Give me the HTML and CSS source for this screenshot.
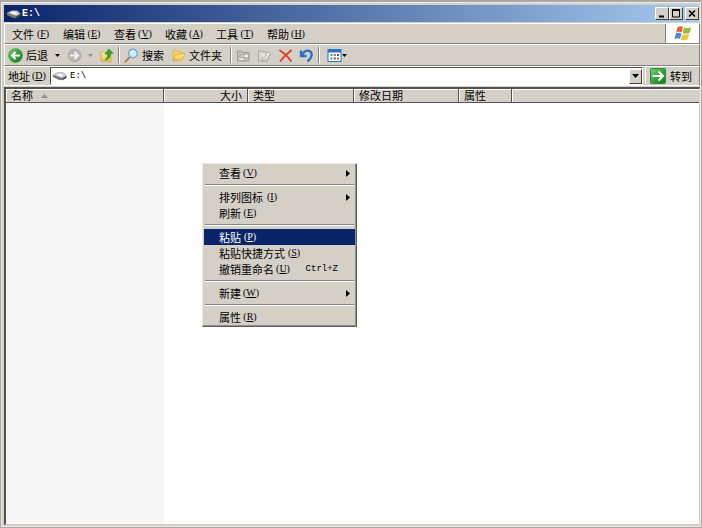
FILE: index.html
```html
<!DOCTYPE html>
<html lang="zh-CN">
<head>
<meta charset="utf-8">
<title>E:\</title>
<link rel="stylesheet" href="styles.css">
</head>
<body>
<svg class="defs" aria-hidden="true">
  <defs>
    <linearGradient id="green" x1="0" y1="0" x2="1" y2="1"><stop offset="0" stop-color="#7ed072"/><stop offset=".55" stop-color="#2f9e35"/><stop offset="1" stop-color="#1c7a22"/></linearGradient>
    <linearGradient id="folder" x1="0" y1="0" x2="0" y2="1"><stop offset="0" stop-color="#fff3a8"/><stop offset="1" stop-color="#f0bb3c"/></linearGradient>
    <symbol id="drive" viewBox="0 0 16 12">
      <path d="M1 5 6 2.500h6L15.500 6 11 8.500z" fill="#cfcfcf" stroke="#888" stroke-width=".6"/>
      <path d="M1 5 11 8.300v2.200L7 10 1 7z" fill="#777"/>
      <path d="M11 8.300 15.500 6v2L11 10.500z" fill="#444"/>
      <path d="M5 4.500 8 3.300l4 1.700-3 1.500z" fill="#fafafa"/>
    </symbol>
  </defs>
</svg>
<div class="window">
  <header class="titlebar">
    <svg class="drive"><use href="#drive"/></svg>
    <h1 class="title">E:\</h1>
    <div class="controls">
      <button class="control" aria-label="最小化"><svg viewBox="0 0 12 11"><path d="M3 8.500h5" stroke="#000" stroke-width="2"/></svg></button>
      <button class="control" aria-label="最大化"><svg viewBox="0 0 12 11"><path d="M2.500 2v7h7V2" fill="none" stroke="#000"/><path d="M2 2h8" stroke="#000" stroke-width="2"/></svg></button>
      <button class="control close" aria-label="关闭"><svg viewBox="0 0 12 11"><path d="m3 2.500 6 6m0-6-6 6" stroke="#000" stroke-width="1.600"/></svg></button>
    </div>
  </header>
  <div class="menurow">
    <nav class="menubar">
      <button>文件<kbd>(<u>F</u>)</kbd></button>
      <button>编辑<kbd>(<u>E</u>)</kbd></button>
      <button>查看<kbd>(<u>V</u>)</kbd></button>
      <button>收藏<kbd>(<u>A</u>)</kbd></button>
      <button>工具<kbd>(<u>T</u>)</kbd></button>
      <button>帮助<kbd>(<u>H</u>)</kbd></button>
    </nav>
    <div class="brand">
      <svg viewBox="0 0 18 17"><path d="M3.500 2.200Q6.500.300 9 2L7.700 7.500Q5 6 2 7.700z" fill="#e8603a"/><path d="M10 2.500q3 1.600 7.200 0l-1.700 5.400q-3.500 1.600-6.800 0z" fill="#8cbf3c"/><path d="M1.800 8.700q3-1.700 5.700-.2L6 14q-2.500-1.500-5.600.2z" fill="#4a86d8"/><path d="M8.400 9q3.400 1.500 6.800 0l-1.600 5.600q-3.600 1.500-6.700-.2z" fill="#f6c336"/></svg>
    </div>
  </div>
  <div class="toolbar" role="toolbar">
    <button class="tool"><svg class="icon" viewBox="0 0 15 15"><circle cx="7.500" cy="7.500" r="6.900" fill="url(#green)" stroke="#338c35" stroke-width=".6"/><path d="M12 7.500H4.500M7.500 4 4 7.500 7.500 11" fill="none" stroke="#fff" stroke-width="2"/></svg>后退</button>
    <button class="drop" aria-label="后退记录"><svg viewBox="0 0 5 3"><path d="M0 0h5L2.500 3z"/></svg></button>
    <button class="tool" aria-label="前进" disabled><svg class="icon" viewBox="0 0 15 15"><circle cx="7.500" cy="7.500" r="6.500" fill="#b5b5b3" stroke="#a0a09e" stroke-width=".6"/><path d="M3 7.500h7.500M7.500 4 11 7.500 7.500 11" fill="none" stroke="#f2f2f2" stroke-width="2"/></svg></button>
    <button class="drop muted" aria-label="前进记录" disabled><svg viewBox="0 0 5 3"><path d="M0 0h5L2.500 3z"/></svg></button>
    <button class="tool" aria-label="向上"><svg class="icon" viewBox="0 0 15 15"><path d="M2 4h4l1 1.500h5V14L2 13z" fill="url(#folder)" stroke="#d7a536" stroke-width=".8"/><path d="M6 12c2-1 2.600-3 2.600-6H6L9.800 1 14 5l-2.600.600c0 3.500-1.400 6.400-5.400 6.400z" fill="#37a632" stroke="#227d22" stroke-width=".6"/></svg></button>
    <span class="divider"></span>
    <button class="tool"><svg class="icon" viewBox="0 0 15 15"><path d="M6 9 1.500 13.500" stroke="#bd7c55" stroke-width="2.200" stroke-linecap="round"/><circle cx="9" cy="5.500" r="4.300" fill="#c9eafa" stroke="#76a5d4" stroke-width="1.400"/><path d="M6.700 5Q7.500 3 9.500 3" fill="none" stroke="#fff"/></svg>搜索</button>
    <button class="tool folders"><svg class="icon" viewBox="0 0 15 15"><path d="M2 12V2.500l3.500-.5L7 3.500l4 .5v3" fill="#f7cf5b" stroke="#d9a73b" stroke-width=".8"/><path d="m2 13 2.500-6L14 5.500 11 12z" fill="url(#folder)" stroke="#d9a73b" stroke-width=".8"/></svg>文件夹</button>
    <span class="divider"></span>
    <button class="tool icononly" aria-label="移至" disabled><svg class="icon" viewBox="0 0 15 15"><path d="M1.500 3h4l1 1.500H13V13H1.500z" fill="#c4c3be" stroke="#9b9b97"/><path d="M4 7h5V4.500L13.500 8 9 11.500V9H4z" fill="#eee" stroke="#92928e" stroke-width=".8"/><path d="M3.500 11h4" stroke="#fff"/></svg></button>
    <button class="tool icononly" aria-label="复制到" disabled><svg class="icon" viewBox="0 0 15 15"><path d="M1.500 3H5l3 2.500V13H1.500z" fill="#d8d8d4" stroke="#a5a5a1"/><path d="M6 4h3l2 2v7H5" fill="#e4e4e0" stroke="#a5a5a1"/><path d="M5 10q4 0 4.500-3.500H8L11 4l3 3-2 .2Q11 12 5 12z" fill="#eee" stroke="#989894" stroke-width=".7"/></svg></button>
    <button class="tool icononly" aria-label="删除"><svg class="icon" viewBox="0 0 15 15"><path d="M2 2.500Q8 6 13 13M13 2.500Q7 7 2.500 13" fill="none" stroke="#dc4327" stroke-width="2" stroke-linecap="round"/></svg></button>
    <button class="tool icononly" aria-label="撤销"><svg class="icon" viewBox="0 0 15 15"><path d="M2 2.500V8h5.500M2.500 7.500C5 3.500 8 2 10.500 3c3.300 1.600 3 6.500-2 10.500" fill="none" stroke="#2a70c4" stroke-width="2.400"/></svg></button>
    <span class="divider tight"></span>
    <button class="tool views" aria-label="查看方式"><svg class="icon" viewBox="0 0 15 15"><rect x="1" y="1.500" width="13" height="12" fill="#fff" stroke="#2872c4"/><path d="M1 3h13" stroke="#2872c4" stroke-width="3"/><path d="M3.500 7h2M3.500 10.500h2" stroke="#3b90a5" stroke-width="2"/><path d="M6.800 7h2M10 10.500h2" stroke="#d55948" stroke-width="2"/><path d="M10 7h2M6.800 10.500h2" stroke="#425b9c" stroke-width="2"/></svg><svg class="caret" viewBox="0 0 5 3"><path d="M0 0h5L2.500 3z"/></svg></button>
  </div>
  <form class="address">
    <label for="path">地址<kbd>(<u>D</u>)</kbd></label>
    <div class="combo">
      <svg class="drive"><use href="#drive"/></svg>
      <input id="path" type="text" value="E:\">
      <button type="button" class="open" aria-label="展开"><svg viewBox="0 0 7 4"><path d="M0 0h7L3.500 4z"/></svg></button>
    </div>
    <button type="button" class="go"><svg viewBox="0 0 16 16"><rect x=".5" y=".5" width="15" height="15" rx="1" fill="url(#green)" stroke="#2e8b34"/><path d="M2.500 8h10M8.500 3.500 13 8l-4.500 4.500" fill="none" stroke="#fff" stroke-width="2"/></svg>转到</button>
  </form>
  <main class="view">
    <table class="files">
      <colgroup><col class="sorted"><col class="size"><col class="type"><col class="date"><col class="attr"><col></colgroup>
      <thead>
        <tr><th>名称<svg class="sort" viewBox="0 0 7 4"><path d="M0 4h7L3.500 0z"/></svg></th><th class="num">大小</th><th>类型</th><th>修改日期</th><th>属性</th><th></th></tr>
      </thead>
      <tbody><tr><td></td><td></td><td></td><td></td><td></td><td></td></tr></tbody>
    </table>
  </main>
</div>
<div class="context" role="menu">
  <button role="menuitem">查看<kbd>(<u>V</u>)</kbd><svg class="more" viewBox="0 0 4 7"><path d="M0 0v7l4-3.500z"/></svg></button>
  <hr>
  <button role="menuitem">排列图标<kbd>(<u>I</u>)</kbd><svg class="more" viewBox="0 0 4 7"><path d="M0 0v7l4-3.500z"/></svg></button>
  <button role="menuitem">刷新<kbd>(<u>E</u>)</kbd></button>
  <hr>
  <button role="menuitem" class="active">粘贴<kbd>(<u>P</u>)</kbd></button>
  <button role="menuitem">粘贴快捷方式<kbd>(<u>S</u>)</kbd></button>
  <button role="menuitem">撤销重命名<kbd>(<u>U</u>)</kbd><span class="shortcut">Ctrl+Z</span></button>
  <hr>
  <button role="menuitem">新建<kbd>(<u>W</u>)</kbd><svg class="more" viewBox="0 0 4 7"><path d="M0 0v7l4-3.500z"/></svg></button>
  <hr>
  <button role="menuitem">属性<kbd>(<u>R</u>)</kbd></button>
</div>
</body>
</html>
```
FILE: styles.css
```css
:root {
  --face: #d4d0c8;
  --shade: #848280;
  --dark: #55534f;
  --navy: #0a246a;
}

* { box-sizing: border-box; }

body {
  margin: 0;
  font: 11px/16px "Noto Sans CJK SC", sans-serif;
  color: #000;
}

button {
  display: flex;
  align-items: center;
  margin: 0;
  padding: 0;
  border: 0;
  background: none;
  color: inherit;
  font: inherit;
  white-space: nowrap;
}

svg { display: block; flex: none; }
kbd {
  display: inline-block;
  min-width: 16px;
  padding-left: 2px;
  font: 10px/16px "Liberation Serif", serif;
}
.defs { position: absolute; width: 0; height: 0; }

.window {
  display: flex;
  flex-direction: column;
  height: 100vh;
  padding: 2px 1px 2px 2px;
  border: 1px solid #aaa8a4;
  border-top-width: 2px;
  background: var(--face);
  box-shadow: inset 1px 1px #eeece8, inset -1px -1px #eeece8;
}

.titlebar {
  display: flex;
  align-items: center;
  height: 17px;
  margin: 1px 1px 1px;
  padding-left: 2px;
  background: linear-gradient(90deg, #0a246a, #a6caf0);
  color: #fff;
}
.drive { width: 15px; height: 12px; }
.title { margin: 0 auto 0 1px; font: bold 10px/16px "Liberation Mono", monospace; }
.controls { display: flex; }
.control {
  width: 14px;
  height: 13px;
  border: 1px solid;
  border-color: #fff #404040 #404040 #fff;
  background: var(--face);
}
.control svg { width: 12px; height: 11px; }
.close { margin-left: 2px; }

.menurow, .toolbar, .address {
  display: flex;
  align-items: center;
  margin-left: 1px;
  border-top: 1px solid #fff;
  border-left: 1px solid #fff;
  border-right: 1px solid var(--shade);
}
.menurow { height: 21px; border-bottom: 1px solid var(--shade); align-items: stretch; }
.menubar { display: flex; gap: 13px; padding-left: 7px; }
.brand {
  display: flex;
  align-items: center;
  justify-content: center;
  width: 34px;
  margin-left: auto;
  border-left: 1px solid var(--shade);
  background: #fff;
}
.brand svg { width: 18px; height: 17px; }

.toolbar { height: 22px; padding-left: 3px; border-bottom: 1px solid var(--shade); }
.icon { width: 15px; height: 15px; }
.tool { gap: 3px; }
.drop { width: 19px; justify-content: center; }
.drop svg, .caret { width: 5px; height: 3px; }
.drop.muted { width: 17px; fill: #8f8d88; }
.divider {
  width: 2px;
  height: 16px;
  margin: 0 4px;
  border-left: 1px solid var(--shade);
  border-right: 1px solid #fff;
}
.folders { margin-left: 7px; margin-right: 4px; }
.icononly { margin-right: 6px; }
.divider.tight { margin-left: -2px; margin-right: 7px; }
.views { gap: 0; }

.address { height: 20px; padding-left: 3px; border-bottom: 1px solid #fff; }
.address label { display: flex; }
.combo {
  display: flex;
  align-items: center;
  flex: 1;
  height: 18px;
  margin-left: 4px;
  border: 1px solid;
  border-color: var(--dark) #fff #fff var(--dark);
  background: #fff;
}
.combo .drive { margin-left: 1px; }
.combo input {
  flex: 1;
  min-width: 0;
  padding: 0 3px;
  border: 0;
  outline: 0;
  background: none;
  font: 9px/14px "Liberation Mono", monospace;
}
.open {
  justify-content: center;
  width: 13px;
  height: 15px;
  border: 1px solid;
  border-color: #fff #404040 #404040 #fff;
  background: var(--face);
}
.open svg { width: 7px; height: 4px; }
.go { gap: 4px; margin: 0 7px 0 2px; padding-left: 4px; border-left: 1px solid #fff; }
.go svg { width: 16px; height: 16px; }

.view {
  display: flex;
  flex: 1;
  margin: 1px 0 0 1px;
  border: 1px solid var(--face);
  border-top: 2px solid var(--dark);
  border-left: 2px solid var(--dark);
  background: #fff;
}
.files {
  width: 100%;
  height: 100%;
  table-layout: fixed;
  border-collapse: separate;
  border-spacing: 0;
}
.sorted { width: 158px; background: #f6f6f6; }
.size { width: 84px; }
.type { width: 106px; }
.date { width: 105px; }
.attr { width: 53px; }
.files th {
  height: 14px;
  padding: 0 5px;
  border-right: 1px solid var(--dark);
  border-bottom: 1px solid var(--dark);
  background: var(--face);
  box-shadow: inset 1px 1px #fff;
  font-weight: normal;
  line-height: 13px;
  text-align: left;
}
.files th:last-child { border-right: 0; }
.files .num { text-align: right; }
.files td { padding: 0; }
.sort { display: inline-block; width: 7px; height: 4px; margin-left: 8px; vertical-align: 2px; fill: #918f8a; }

.context {
  position: absolute;
  left: 202px;
  top: 163px;
  width: 155px;
  padding: 1px;
  border: 1px solid;
  border-color: #eceae5 #5f5d59 #5f5d59 #eceae5;
  background: var(--face);
  box-shadow: inset -1px -1px #918f8a;
}
.context button { width: 100%; height: 16px; padding: 0 5px 0 15px; }
.context hr {
  height: 2px;
  margin: 3px 1px;
  border: 0;
  border-top: 1px solid var(--shade);
  border-bottom: 1px solid #fff;
}
.context .active { background: var(--navy); color: #fff; }
.more { width: 4px; height: 7px; margin-left: auto; }
.shortcut {
  margin-left: auto;
  margin-right: 12px;
  font: 9px/16px "Liberation Mono", monospace;
}
```
